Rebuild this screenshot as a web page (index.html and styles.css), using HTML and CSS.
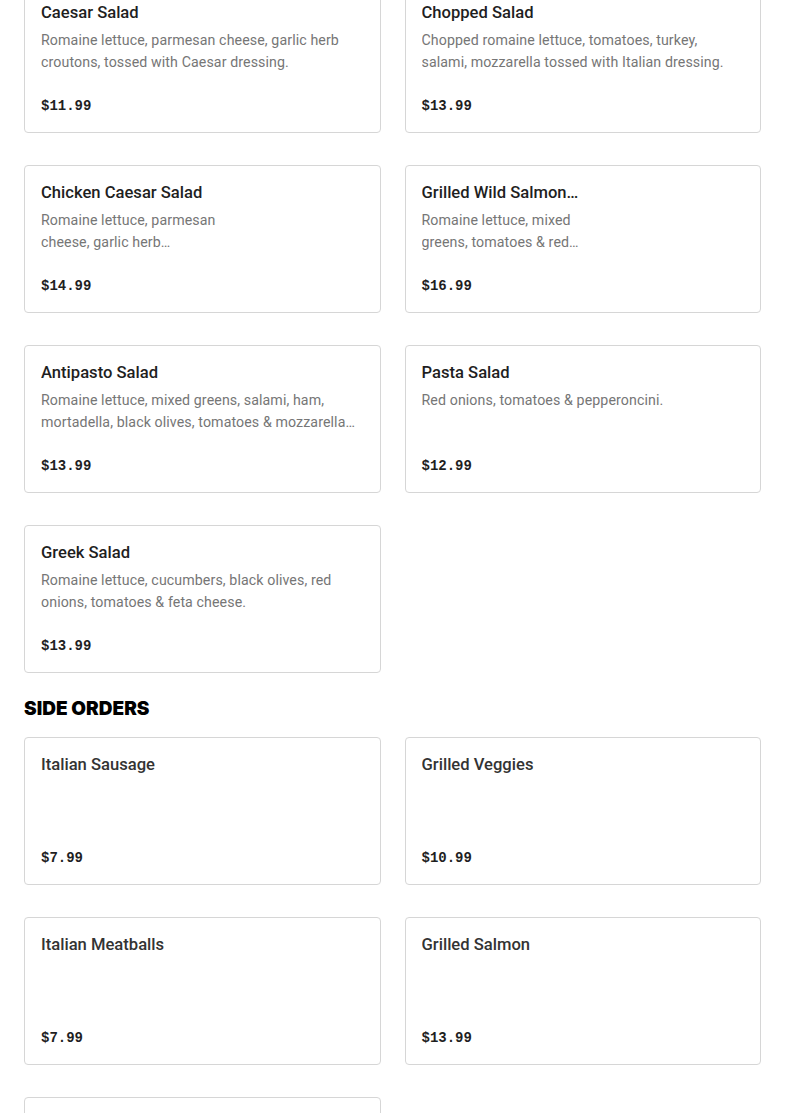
FILE: index.html
```html
<!DOCTYPE html>
<html lang="en">
<head>
<meta charset="utf-8">
<title>Menu</title>
<link rel="stylesheet" href="styles.css">
</head>
<body>
<main class="menu">
  <section class="section section-first">
    <div class="grid">
      <article class="card">
        <h3 class="title">Caesar Salad</h3>
        <p class="desc">Romaine lettuce, parmesan cheese, garlic herb croutons, tossed with Caesar dressing.</p>
        <div class="price">$11.99</div>
      </article>
      <article class="card">
        <h3 class="title">Chopped Salad</h3>
        <p class="desc">Chopped romaine lettuce, tomatoes, turkey, salami, mozzarella tossed with Italian dressing.</p>
        <div class="price">$13.99</div>
      </article>
      <article class="card card-narrow">
        <h3 class="title">Chicken Caesar Salad</h3>
        <p class="desc">Romaine lettuce, parmesan cheese, garlic herb…</p>
        <div class="price">$14.99</div>
      </article>
      <article class="card card-narrow">
        <h3 class="title">Grilled Wild Salmon…</h3>
        <p class="desc">Romaine lettuce, mixed greens, tomatoes &amp; red…</p>
        <div class="price">$16.99</div>
      </article>
      <article class="card">
        <h3 class="title">Antipasto Salad</h3>
        <p class="desc">Romaine lettuce, mixed greens, salami, ham, mortadella, black olives, tomatoes &amp; mozzarella cheese.</p>
        <div class="price">$13.99</div>
      </article>
      <article class="card">
        <h3 class="title">Pasta Salad</h3>
        <p class="desc">Red onions, tomatoes &amp; pepperoncini.</p>
        <div class="price">$12.99</div>
      </article>
      <article class="card">
        <h3 class="title">Greek Salad</h3>
        <p class="desc">Romaine lettuce, cucumbers, black olives, red onions, tomatoes &amp; feta cheese.</p>
        <div class="price">$13.99</div>
      </article>
    </div>
  </section>
  <section class="section">
    <h2 class="section-title">SIDE ORDERS</h2>
    <div class="grid">
      <article class="card card-side">
        <h3 class="title">Italian Sausage</h3>
        <div class="price">$7.99</div>
      </article>
      <article class="card card-side">
        <h3 class="title">Grilled Veggies</h3>
        <div class="price">$10.99</div>
      </article>
      <article class="card card-side">
        <h3 class="title">Italian Meatballs</h3>
        <div class="price">$7.99</div>
      </article>
      <article class="card card-side">
        <h3 class="title">Grilled Salmon</h3>
        <div class="price">$13.99</div>
      </article>
      <article class="card card-side">
        <h3 class="title">Garlic Bread</h3>
        <div class="price">$5.99</div>
      </article>
    </div>
  </section>
</main>
</body>
</html>
```

FILE: styles.css
```css
* { box-sizing: border-box; }

html, body {
  margin: 0;
  padding: 0;
  background: #ffffff;
}

body {
  font-family: Roboto, "Liberation Sans", Arial, sans-serif;
  color: #1f1f1f;
}

.menu {
  padding: 0 24px;
}

.section-first {
  margin-top: -15px;
}

.section-title {
  margin: 24px 0 16px;
  font-family: Inter, "Liberation Sans", Arial, sans-serif;
  font-weight: 900;
  font-size: 19px;
  line-height: 24px;
  color: #000000;
}

.grid {
  display: grid;
  grid-template-columns: 1fr 1fr;
  column-gap: 24px;
  row-gap: 32px;
}

.card {
  display: flex;
  flex-direction: column;
  height: 148px;
  padding: 16px;
  border: 1px solid #d6d6d6;
  border-radius: 4px;
  background: #ffffff;
  min-width: 0;
}

.title {
  margin: 0;
  font-size: 16.6px;
  font-weight: 500;
  line-height: 22px;
  color: #1f1f1f;
  white-space: nowrap;
  overflow: hidden;
  text-overflow: ellipsis;
}

.card-side .title {
  color: #333333;
}

.desc {
  margin: 5px 0 0;
  font-size: 14.2px;
  letter-spacing: 0.1px;
  line-height: 22px;
  color: #767676;
  display: -webkit-box;
  -webkit-line-clamp: 2;
  -webkit-box-orient: vertical;
  overflow: hidden;
}

.card-narrow .desc {
  max-width: 190px;
}

.price {
  margin-top: auto;
  font-family: "Liberation Mono", "DejaVu Sans Mono", monospace;
  font-weight: 700;
  font-size: 14px;
  line-height: 20px;
  color: #1f1f1f;
}
```
